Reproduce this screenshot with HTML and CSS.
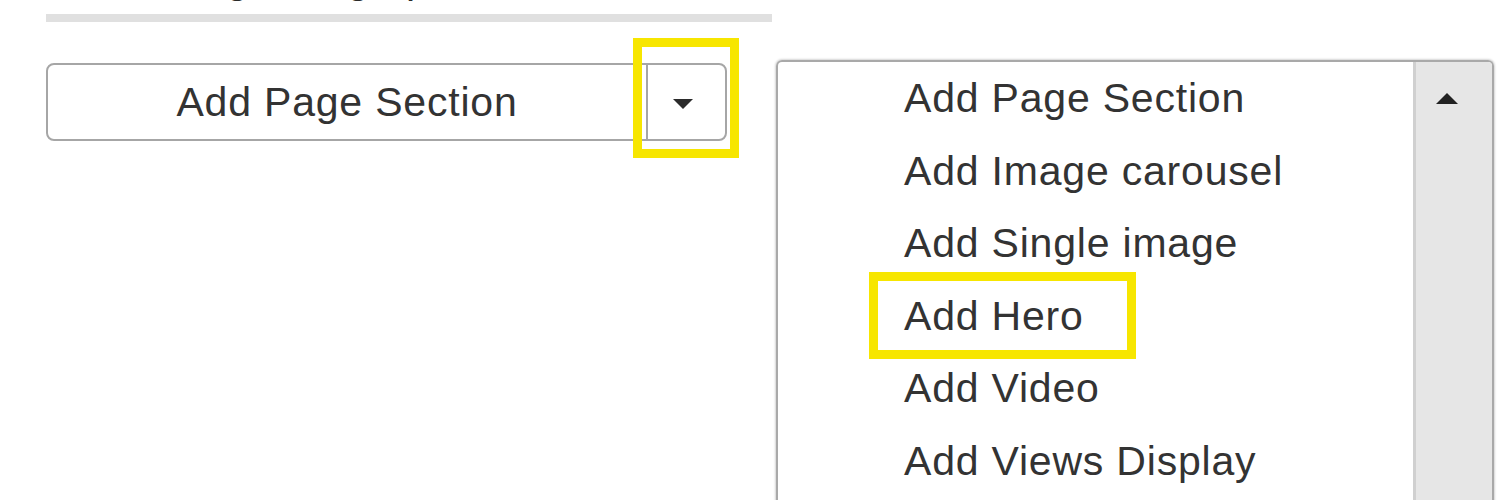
FILE: index.html
```html
<!DOCTYPE html>
<html lang="en">
<head>
<meta charset="utf-8">
<title>Add Page Section</title>
<link rel="stylesheet" href="styles.css">
</head>
<body>
<div class="page">
  <h2 class="heading">Reordering Paragraphs</h2>
  <div class="row">
    <div class="left">
      <div class="btn-group">
        <div class="btn-main">Add Page Section</div>
        <div class="btn-toggle">
          <svg class="caret" width="20" height="10" viewBox="0 0 20 10"><polygon points="0,0 20,0 10,10" fill="#2b2b2b"/></svg>
        </div>
        <span class="highlight hl-toggle"></span>
      </div>
    </div>
    <div class="listbox">
      <ul class="options">
        <li class="option">Add Page Section</li>
        <li class="option">Add Image carousel</li>
        <li class="option">Add Single image</li>
        <li class="option">Add Hero<span class="highlight hl-hero"></span></li>
        <li class="option">Add Video</li>
        <li class="option">Add Views Display</li>
      </ul>
      <div class="scrollbar">
        <svg class="arrow-up" width="22" height="11" viewBox="0 0 22 11"><polygon points="11,0 22,11 0,11" fill="#222"/></svg>
      </div>
    </div>
  </div>
</div>
</body>
</html>
```
FILE: styles.css
```css
html, body {
  margin: 0;
  padding: 0;
  background: #ffffff;
  overflow: hidden;
  height: 500px;
}

.page {
  padding-left: 46px;
  font-family: "Liberation Sans", Arial, Helvetica, sans-serif;
  color: #333333;
}

.heading {
  margin: -44px 0 0 0;
  width: 726px;
  font-size: 41px;
  line-height: 47px;
  font-weight: normal;
  color: #2a2a2a;
  padding-bottom: 11px;
  border-bottom: 8px solid #e0e0e0;
}

.row {
  display: flex;
  align-items: flex-start;
  margin-top: 38px;
}

.left {
  width: 730px;
  flex: none;
  padding-top: 3px;
}

.btn-group {
  position: relative;
  display: flex;
  width: 681px;
  height: 78px;
  box-sizing: border-box;
  border: 2px solid #a6a6a6;
  border-radius: 8px;
}

.btn-main {
  flex: 1;
  display: flex;
  align-items: center;
  justify-content: center;
  font-size: 41px;
  letter-spacing: 0.8px;
  color: #333333;
}

.btn-toggle {
  width: 79px;
  flex: none;
  box-sizing: border-box;
  border-left: 2px solid #a6a6a6;
  display: flex;
  align-items: center;
  justify-content: center;
  padding-right: 7px;
  padding-top: 4px;
}

.caret {
  display: block;
}

.highlight {
  position: absolute;
  box-sizing: border-box;
  border: 9px solid #f7e600;
  pointer-events: none;
}

.hl-toggle {
  left: 585px;
  top: -27px;
  width: 106px;
  height: 120px;
}

.listbox {
  flex: none;
  width: 718px;
  height: 480px;
  box-sizing: border-box;
  border: 2px solid #a9a9a9;
  border-bottom: none;
  border-radius: 6px 6px 0 0;
  box-shadow: 0 0 2px 1px #d6d6d6;
  display: grid;
  grid-template-columns: 1fr 79px;
  overflow: hidden;
}

.options {
  list-style: none;
  margin: 0;
  padding: 0 0 0 126px;
  font-size: 41px;
  letter-spacing: 0.8px;
  line-height: 72.6px;
  color: #333333;
}

.option {
  position: relative;
  white-space: nowrap;
}

.hl-hero {
  left: -35px;
  top: -8px;
  width: 267px;
  height: 87px;
}

.scrollbar {
  background: #e6e6e6;
  border-left: 3px solid #d0d0d0;
  padding-top: 31px;
  padding-left: 20px;
}

.arrow-up {
  display: block;
}
```
